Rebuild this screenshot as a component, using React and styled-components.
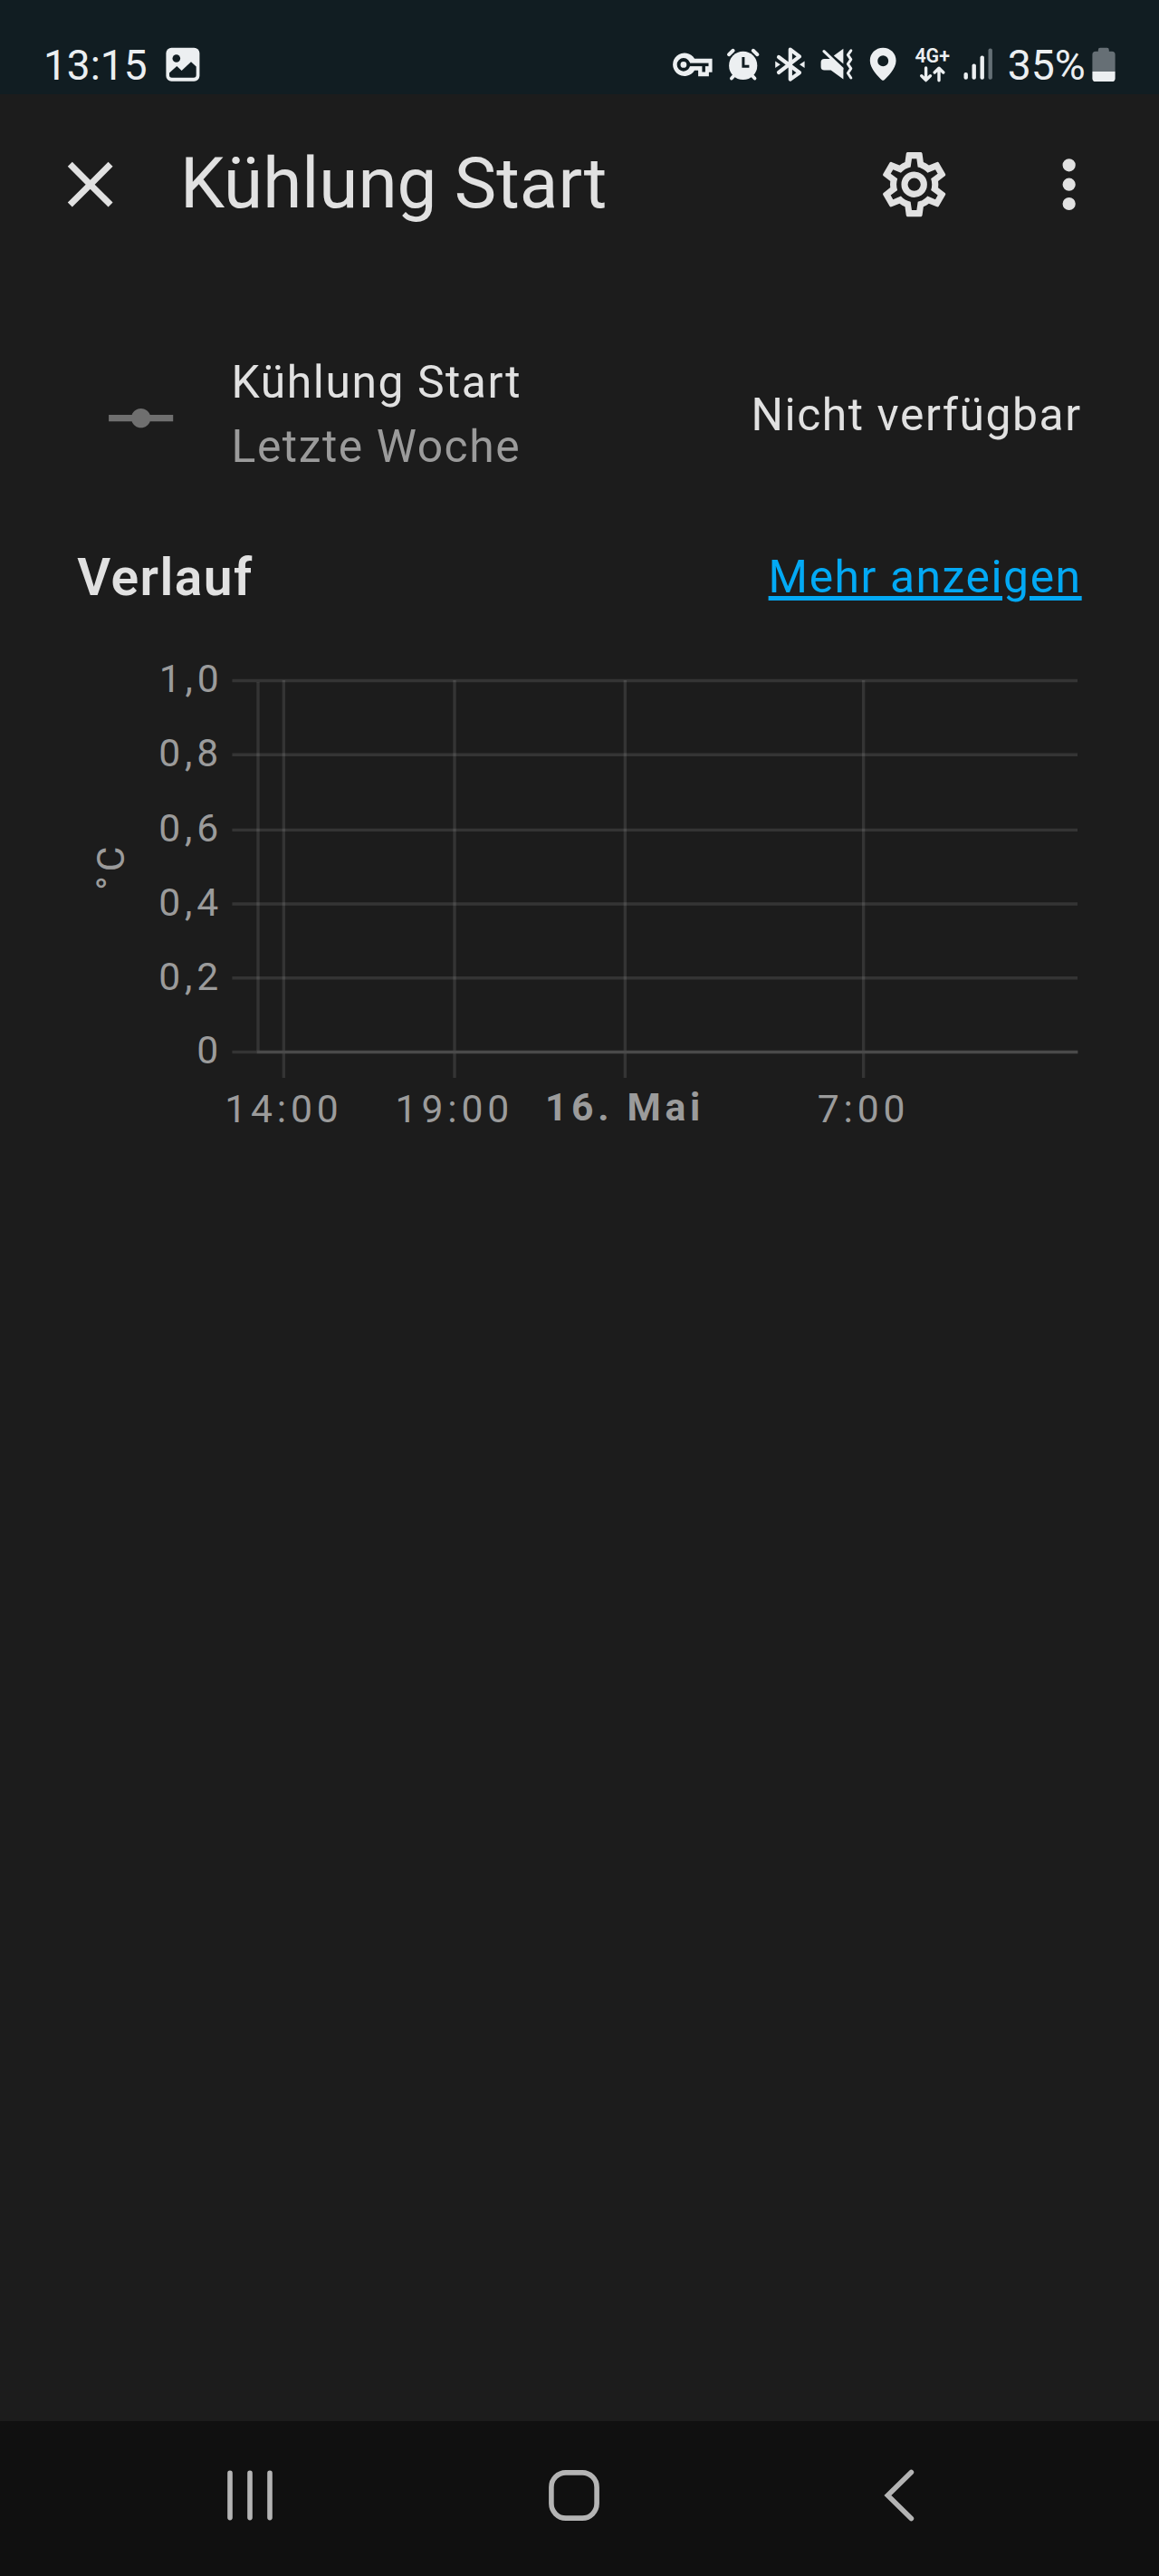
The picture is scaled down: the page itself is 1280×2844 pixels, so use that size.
import React from "react";
import styled, { createGlobalStyle } from "styled-components";

const GlobalStyle = createGlobalStyle`
  body { margin: 0; background: #1c1c1c; }
  * { box-sizing: border-box; }
`;

const Screen = styled.div`
  width: 1280px;
  height: 2844px;
  display: flex;
  flex-direction: column;
  overflow: hidden;
  background: #1c1c1c;
  color: #e1e1e1;
  font-family: Roboto, "Liberation Sans", sans-serif;
`;

const StatusBar = styled.header`
  height: 104px;
  flex: none;
  display: flex;
  align-items: center;
  justify-content: space-between;
  padding: 38px 48px 0;
  background: #111d22;
  color: #eceff1;
`;

const StatusGroup = styled.div`
  display: flex;
  align-items: center;
`;

const StatusText = styled.span`
  font-size: ${(p) => p.$size || 46}px;
  line-height: 54px;
  margin: 2px 0 0 ${(p) => p.$gap || 0}px;
  white-space: nowrap;
`;

const StatusIcon = styled.svg`
  display: block;
  flex: none;
  width: ${(p) => p.$w}px;
  height: 40px;
  margin-left: ${(p) => p.$gap || 0}px;
  fill: currentColor;
  overflow: visible;
`;

const AppBar = styled.div`
  height: 200px;
  flex: none;
  display: flex;
  align-items: center;
  padding: 0 57px 0 56.8px;
`;

const MdiIcon = styled.svg`
  display: block;
  flex: none;
  width: 85.33px;
  height: 85.33px;
  fill: currentColor;
`;

const Title = styled.h1`
  flex: 1;
  margin: 0 0 5px 56.8px;
  font-size: 78.2px;
  line-height: 96px;
  font-weight: 400;
`;

const Actions = styled.div`
  display: flex;
  gap: 85.2px;
`;

const StateRow = styled.section`
  flex: none;
  display: flex;
  align-items: center;
  margin-top: 83px;
  padding: 0 85.33px 0 113.4px;
  font-size: 49.8px;
  line-height: 71px;
  letter-spacing: 0.03125em;
`;

const StateIcon = styled(MdiIcon)`
  margin: 7px 56.8px 0 0;
  color: #6f6f6f;
`;

const StateInfo = styled.div`
  flex: 1;
  display: flex;
  flex-direction: column;
`;

const Secondary = styled.span`
  color: #9b9b9b;
`;

const SectionHead = styled.section`
  flex: none;
  display: flex;
  align-items: center;
  justify-content: space-between;
  margin-top: 72.5px;
  padding: 0 85.33px;
  line-height: 71px;
`;

const SectionTitle = styled.h2`
  margin: 0;
  font-size: 56.9px;
  font-weight: 570;
  letter-spacing: 1.45px;
`;

const MoreLink = styled.a`
  color: #03a9f4;
  font-size: 49.8px;
  letter-spacing: 0.03125em;
  text-decoration: underline;
  text-decoration-thickness: 5px;
  text-underline-offset: 4px;
`;

const ChartArea = styled.div`
  flex: 1;
  padding-top: 27.5px;
`;

const ChartSvg = styled.svg`
  display: block;
  width: 1280px;
  height: 580px;
`;

const ChartLabel = styled.text`
  fill: #9b9b9b;
  font-size: 42.67px;
  font-weight: ${(p) => (p.$major ? 700 : 400)};
  letter-spacing: ${(p) => (p.$major ? 4.65 : 4.85)}px;
`;

const NavBar = styled.nav`
  height: 171px;
  flex: none;
  display: flex;
  align-items: center;
  gap: 301.8px;
  padding: 0 0 7px 248px;
  background: #101010;
`;

const NavIcon = styled.svg`
  display: block;
  width: 56px;
  height: 60px;
  fill: none;
  stroke: #b4b4b4;
  stroke-width: 5.6;
  stroke-linecap: round;
`;

const BAR = "#111d22";

const PictureIcon = () => (
  <StatusIcon $w={38} $gap={20.6} viewBox="0 0 38 40">
    <rect x="0.4" y="1.8" width="37" height="37" rx="6" />
    <circle cx="11.8" cy="13.5" r="4.3" fill={BAR} />
    <path d="M4 29.5 12.3 22 17.6 27 28 17.3 33.7 22.6V32q0 2.8-2.8 2.8H6.8Q4 34.8 4 32Z" fill={BAR} />
  </StatusIcon>
);

const KeyIcon = () => (
  <StatusIcon $w={46} viewBox="0 0 46 40">
    <g transform="translate(0.4 -1.7) scale(1.84)">
      <path d="M22 19h-6.4v-3.6h-2.2A7 6.9 0 1 1 13.4 8.4H24V16.6h-2z" />
      <g fill="none" stroke={BAR} strokeWidth="1.9">
        <circle cx="6.8" cy="12" r="2.9" strokeWidth="2.1" />
        <path d="M9.6 12H21.8" />
        <path d="M18.9 12V16.4" />
      </g>
    </g>
  </StatusIcon>
);

const AlarmIcon = () => (
  <StatusIcon $w={38} $gap={14} viewBox="0 0 38 40">
    <circle cx="18.7" cy="21.4" r="15.6" />
    <g fill="none" stroke="currentColor" strokeLinecap="round">
      <path d="M3 9.2 7.6 4.8M34.4 9.2 29.8 4.8" strokeWidth="4" />
      <path d="M5.9 35.6 10 31M31.5 35.6 27.4 31" strokeWidth="3.8" />
    </g>
    <path d="M18.9 12V22.2H25.4" fill="none" stroke={BAR} strokeWidth="3" />
  </StatusIcon>
);

const BluetoothIcon = () => (
  <StatusIcon $w={34} $gap={15} viewBox="0 0 34 40">
    <path
      d="M5 12 28 29.3 17.8 36.6V3.6L28 11.4 5 29"
      fill="none"
      stroke="currentColor"
      strokeWidth="4.2"
      strokeLinecap="round"
      strokeLinejoin="round"
    />
    <path d="M1.2 16.6V24L6.8 20.3ZM33.6 16.4V24L28 20.3Z" />
  </StatusIcon>
);

const MuteIcon = () => (
  <StatusIcon $w={38} $gap={16} viewBox="0 0 38 40">
    <path d="M5.4 13.9H13L26.4 25V36.4L12.6 26.6H5.4Q1.6 26.6 1.6 22.8V17.7Q1.6 13.9 5.4 13.9Z" />
    <path d="M26.4 2.8V19.4L15.8 10.4Z" />
    <path d="M5 5.6 25 24.6" fill="none" stroke="currentColor" strokeWidth="3.2" strokeLinecap="round" />
    <path
      d="M34.8 4.8 31.4 9.6 34.8 14.6 31.4 19.6 34.8 24.6 31.4 29.8 34.8 35"
      fill="none"
      stroke="currentColor"
      strokeWidth="3"
      strokeLinecap="round"
      strokeLinejoin="round"
    />
  </StatusIcon>
);

const PinIcon = () => (
  <StatusIcon $w={30} $gap={17} viewBox="0 0 30 40">
    <path
      fillRule="evenodd"
      d="M15.2 1.8C23.4 1.8 29.6 8 29.6 15.9 29.6 25 19.5 34.4 16.6 37.2Q15.2 38.4 13.8 37.2C10.9 34.4.8 25 .8 15.9.8 8 7 1.8 15.2 1.8ZM15.2 10.2A6 6 0 1 0 15.2 22.2 6 6 0 1 0 15.2 10.2Z"
    />
  </StatusIcon>
);

const NetworkIcon = () => (
  <StatusIcon $w={40} $gap={20} viewBox="0 0 40 40">
    <text x="0.4" y="18.2" fontSize="21.4" fontWeight="600">4G+</text>
    <path
      d="M12.6 24V37.4M7.8 32.8 12.6 37.6 17.4 32.8M27 37.8V24.4M22.2 29 27 24.2 31.8 29"
      fill="none"
      stroke="currentColor"
      strokeWidth="3.4"
      strokeLinecap="round"
      strokeLinejoin="round"
    />
  </StatusIcon>
);

const SIGNAL_BARS = [
  { x: 0.5, y: 29, on: true },
  { x: 9.5, y: 19.6, on: true },
  { x: 18.5, y: 10.4, on: true },
  { x: 27.5, y: 2.4, on: false },
];

const SignalIcon = () => (
  <StatusIcon $w={33} $gap={14} viewBox="0 0 33 40">
    {SIGNAL_BARS.map((b) => (
      <rect key={b.x} x={b.x} y={b.y} width="4.4" height={36.8 - b.y} rx="2" fill={b.on ? "currentColor" : "#646f75"} />
    ))}
  </StatusIcon>
);

const BatteryIcon = () => (
  <StatusIcon $w={26} $gap={7.2} viewBox="0 0 26 40">
    <path d="M6.8 4.2Q6.8 1.8 9 1.8H16.6Q18.8 1.8 18.8 4.2V5.8H22Q25.6 5.8 25.6 9.4V28H.4V9.4Q.4 5.8 4 5.8H6.8Z" fill="#666f75" />
    <path d="M.4 28H25.6V35.4Q25.6 39 22 39H4Q.4 39 .4 35.4Z" />
  </StatusIcon>
);

const COG =
  "M12,8A4,4 0 0,1 16,12A4,4 0 0,1 12,16A4,4 0 0,1 8,12A4,4 0 0,1 12,8M12,10A2,2 0 0,0 10,12A2,2 0 0,0 12,14A2,2 0 0,0 14,12A2,2 0 0,0 12,10M10,22C9.75,22 9.54,21.82 9.5,21.58L9.13,18.93C8.5,18.68 7.96,18.34 7.44,17.94L4.95,18.95C4.73,19.03 4.46,18.95 4.34,18.73L2.34,15.27C2.21,15.05 2.27,14.78 2.46,14.63L4.57,12.97L4.5,12L4.57,11L2.46,9.37C2.27,9.22 2.21,8.95 2.34,8.73L4.34,5.27C4.46,5.05 4.73,4.96 4.95,5.05L7.44,6.05C7.96,5.66 8.5,5.32 9.13,5.07L9.5,2.42C9.54,2.18 9.75,2 10,2H14C14.25,2 14.46,2.18 14.5,2.42L14.87,5.07C15.5,5.32 16.04,5.66 16.56,6.05L19.05,5.05C19.27,4.96 19.54,5.05 19.66,5.27L21.66,8.73C21.79,8.95 21.73,9.22 21.54,9.37L19.43,11L19.5,12L19.43,13L21.54,14.63C21.73,14.78 21.79,15.05 21.66,15.27L19.66,18.73C19.54,18.95 19.27,19.04 19.05,18.95L16.56,17.95C16.04,18.34 15.5,18.68 14.87,18.93L14.5,21.58C14.46,21.82 14.25,22 14,22H10M11.25,4L10.88,6.61C9.68,6.86 8.62,7.5 7.85,8.39L5.44,7.35L4.69,8.65L6.8,10.2C6.4,11.37 6.4,12.64 6.8,13.8L4.68,15.36L5.43,16.66L7.86,15.62C8.63,16.5 9.68,17.14 10.87,17.38L11.24,20H12.76L13.13,17.39C14.32,17.14 15.37,16.5 16.14,15.62L18.57,16.66L19.32,15.36L17.2,13.81C17.6,12.64 17.6,11.37 17.2,10.2L19.31,8.65L18.56,7.35L16.15,8.39C15.38,7.5 14.32,6.86 13.12,6.62L12.75,4H11.25Z";
const CLOSE =
  "M19,6.41L17.59,5L12,10.59L6.41,5L5,6.41L10.59,12L5,17.59L6.41,19L12,13.41L17.59,19L19,17.59L13.41,12L19,6.41Z";
const DOTS =
  "M12,16A2,2 0 0,1 14,18A2,2 0 0,1 12,20A2,2 0 0,1 10,18A2,2 0 0,1 12,16M12,10A2,2 0 0,1 14,12A2,2 0 0,1 12,14A2,2 0 0,1 10,12A2,2 0 0,1 12,10M12,4A2,2 0 0,1 14,6A2,2 0 0,1 12,8A2,2 0 0,1 10,6A2,2 0 0,1 12,4Z";
const VERTEX =
  "M2 11H9.17C9.58 9.83 10.69 9 12 9S14.42 9.83 14.83 11H22V13H14.83C14.42 14.17 13.31 15 12 15S9.58 14.17 9.17 13H2V11Z";

const Y_TICKS = [
  { label: "1,0", y: 51.5, text: 64, x: 175.7 },
  { label: "0,8", y: 133.2, text: 146, x: 175.2 },
  { label: "0,6", y: 216.4, text: 229, x: 175.2 },
  { label: "0,4", y: 298, text: 310.6, x: 175.2 },
  { label: "0,2", y: 379.8, text: 393, x: 175.2 },
  { label: "0", y: 461.5, text: 474, x: 217.2 },
];

const X_TICKS = [
  { label: "14:00", x: 313.4, text: 248.2 },
  { label: "19:00", x: 502, text: 436.6 },
  { label: "16. Mai", x: 690.4, text: 602, major: true },
  { label: "7:00", x: 953.6, text: 902.8 },
];

const HistoryChart = () => (
  <ChartSvg viewBox="0 0 1280 580">
    <g stroke="#e1e1e1" strokeOpacity="0.125" strokeWidth="3.4">
      {Y_TICKS.map((t) => (
        <line key={t.label} x1="256.4" x2={t.y > 460 ? 283.4 : 1190} y1={t.y} y2={t.y} />
      ))}
      {X_TICKS.map((t) => (
        <line key={t.label} x1={t.x} x2={t.x} y1="51" y2="490" />
      ))}
      <line x1="285" x2="285" y1="53" y2="460" />
    </g>
    <line x1="283.4" x2="1190.4" y1="461.5" y2="461.5" stroke="#4a4a4a" strokeWidth="3.6" />
    {Y_TICKS.map((t) => (
      <ChartLabel key={t.label} x={t.x} y={t.text}>{t.label}</ChartLabel>
    ))}
    {X_TICKS.map((t) => (
      <ChartLabel key={t.label} x={t.text} y={t.major ? 537 : 539.4} $major={t.major}>{t.label}</ChartLabel>
    ))}
    <ChartLabel transform="translate(137.3 283) rotate(-90)">°C</ChartLabel>
  </ChartSvg>
);

export default function App() {
  return (
    <Screen>
      <GlobalStyle />
      <StatusBar>
        <StatusGroup>
          <StatusText>13:15</StatusText>
          <PictureIcon />
        </StatusGroup>
        <StatusGroup>
          <KeyIcon />
          <AlarmIcon />
          <BluetoothIcon />
          <MuteIcon />
          <PinIcon />
          <NetworkIcon />
          <SignalIcon />
          <StatusText $size={46.4} $gap={15.8}>35%</StatusText>
          <BatteryIcon />
        </StatusGroup>
      </StatusBar>

      <AppBar>
        <MdiIcon viewBox="0 0 24 24"><path d={CLOSE} /></MdiIcon>
        <Title>Kühlung Start</Title>
        <Actions>
          <MdiIcon viewBox="0 0 24 24"><path d={COG} /></MdiIcon>
          <MdiIcon viewBox="0 0 24 24"><path d={DOTS} /></MdiIcon>
        </Actions>
      </AppBar>

      <StateRow>
        <StateIcon viewBox="0 0 24 24"><path d={VERTEX} /></StateIcon>
        <StateInfo>
          <span>Kühlung Start</span>
          <Secondary>Letzte Woche</Secondary>
        </StateInfo>
        <span>Nicht verfügbar</span>
      </StateRow>

      <SectionHead>
        <SectionTitle>Verlauf</SectionTitle>
        <MoreLink>Mehr anzeigen</MoreLink>
      </SectionHead>

      <ChartArea>
        <HistoryChart />
      </ChartArea>

      <NavBar>
        <NavIcon viewBox="0 0 56 60"><path d="M6 5.4V54.6M28 5.4V54.6M50 5.4V54.6" /></NavIcon>
        <NavIcon viewBox="0 0 56 60"><rect x="2.9" y="4.9" width="50.2" height="50.2" rx="16" /></NavIcon>
        <NavIcon viewBox="0 0 56 60"><path d="M42.4 4.4 16.4 30 42.4 55.6" /></NavIcon>
      </NavBar>
    </Screen>
  );
}
